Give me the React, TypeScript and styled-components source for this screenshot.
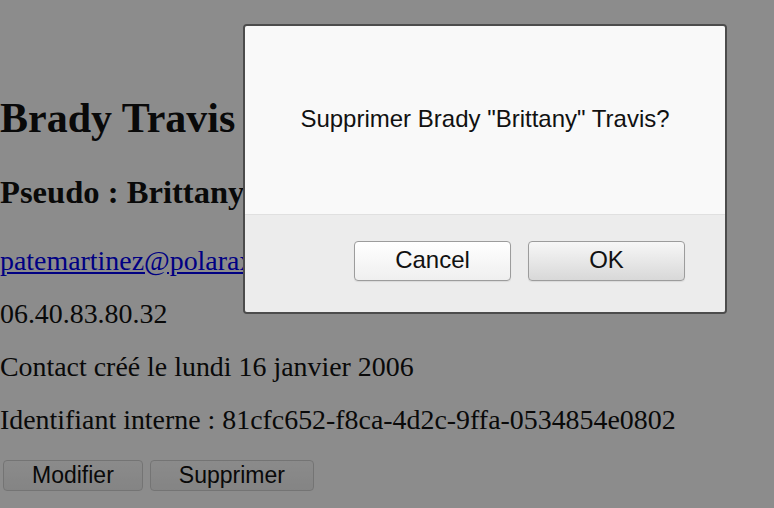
import React from 'react';
import styled, { createGlobalStyle } from 'styled-components';

const GlobalStyle = createGlobalStyle`
  html, body {
    margin: 0;
    padding: 0;
    background: #ffffff;
  }
  body {
    font-family: 'Liberation Serif', 'Times New Roman', serif;
    color: #111;
  }
`

export default function App() {
  return (
    <>
      <GlobalStyle />
      <Page>
        <Name>Brady Travis</Name>
        <Nickname>Pseudo : Brittany</Nickname>
        <Line>
          <Mail href="#">patemartinez@polarax.com</Mail>
        </Line>
        <Line>06.40.83.80.32</Line>
        <Line>Contact créé le lundi 16 janvier 2006</Line>
        <Line last>Identifiant interne : 81cfc652-f8ca-4d2c-9ffa-0534854e0802</Line>
        <Actions>
          <PageButton>Modifier</PageButton>
          <PageButton>Supprimer</PageButton>
        </Actions>
      </Page>

      <Overlay>
        <Dialog>
          <DialogBody>
            <Message>Supprimer Brady "Brittany" Travis?</Message>
          </DialogBody>
          <DialogFooter>
            <DialogButton>Cancel</DialogButton>
            <DialogButton primary>OK</DialogButton>
          </DialogFooter>
        </Dialog>
      </Overlay>
    </>
  );
}

const Page = styled.main`
  padding: 95px 0 0 0;
  height: 508px;
  box-sizing: border-box;
  overflow: hidden;
`

const Name = styled.h1`
  font-size: 42px;
  line-height: 47px;
  font-weight: 700;
  margin: 0 0 32px;
`

const Nickname = styled.h2`
  font-size: 32.6px;
  line-height: 37px;
  font-weight: 700;
  margin: 0 0 35px;
`

const Line = styled.p<{ last?: boolean }>`
  font-size: 27.9px;
  line-height: 29px;
  margin: 0 0 ${p => (p.last ? '26px' : '24px')};
  white-space: nowrap;
`

const Mail = styled.a`
  color: #0000ee;
  text-decoration: underline;
`

const Actions = styled.div`
  display: flex;
  gap: 7px;
  padding-left: 3px;
`

const PageButton = styled.button`
  height: 31px;
  padding: 0 28px;
  font-family: 'Liberation Sans', Arial, sans-serif;
  font-size: 23px;
  color: #111;
  background: linear-gradient(#fdfdfd, #f1f1f1);
  border: 1px solid #d4d4d4;
  border-radius: 4px;
`

const Overlay = styled.div`
  position: fixed;
  inset: 0;
  background: rgba(0, 0, 0, 0.45);
`

const Dialog = styled.div`
  position: absolute;
  left: 243px;
  top: 24px;
  width: 480px;
  height: 286px;
  border: 2px solid #4c4c4c;
  border-radius: 4px;
  overflow: hidden;
  display: flex;
  flex-direction: column;
  font-family: 'Liberation Sans', Arial, sans-serif;
`

const DialogBody = styled.div`
  height: 189px;
  background: #f9f9f9;
  border-bottom: 1px solid #e0e0e0;
  display: flex;
  align-items: center;
  justify-content: center;
  padding-bottom: 3px;
  box-sizing: border-box;
`

const Message = styled.div`
  font-size: 24px;
  color: #111;
`

const DialogFooter = styled.div`
  flex: 1;
  background: #ececec;
  display: flex;
  justify-content: flex-end;
  align-items: flex-start;
  gap: 17px;
  padding: 26px 40px 0 0;
`

const DialogButton = styled.button<{ primary?: boolean }>`
  width: 157px;
  height: 40px;
  font-family: 'Liberation Sans', Arial, sans-serif;
  font-size: 24px;
  color: #111;
  border: 1px solid #9c9c9c;
  border-radius: 4px;
  box-shadow: 0 1px 1px rgba(0, 0, 0, 0.08);
  background: ${p =>
    p.primary
      ? 'linear-gradient(#f7f7f7, #d8d8d8)'
      : 'linear-gradient(#ffffff, #efefef)'};
  padding: 0 0 2px;
`
